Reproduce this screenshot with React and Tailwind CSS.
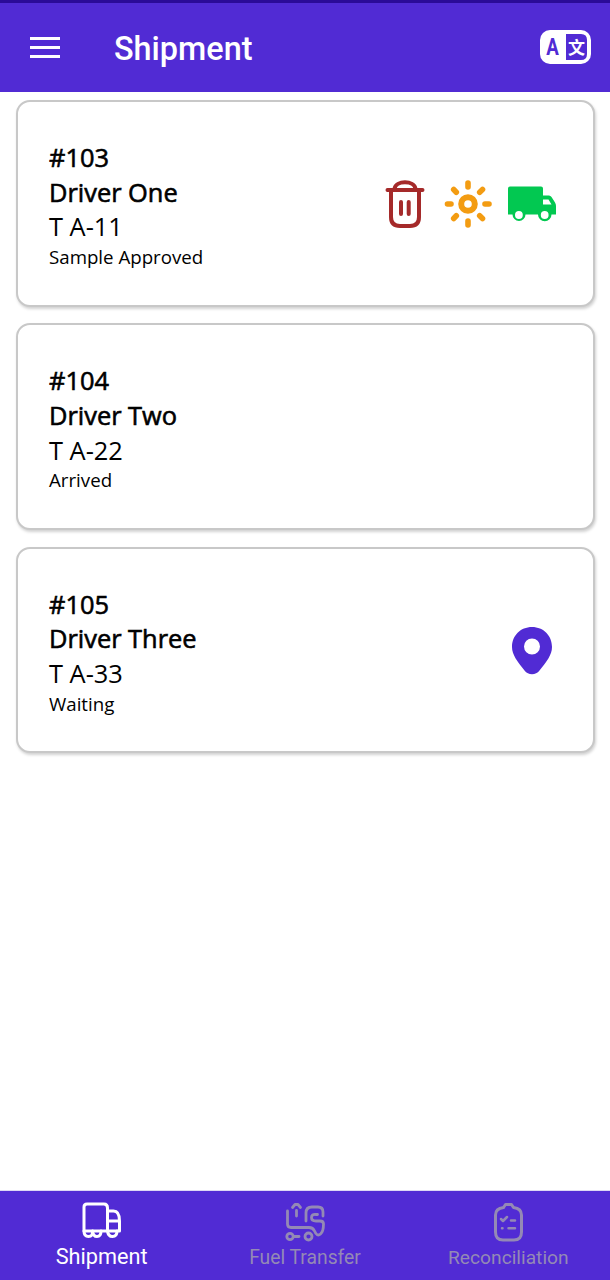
import React from "react";

function TrashIcon() {
  return (
    <svg className="h-[50px] w-[42px]" viewBox="384 179 42 50" fill="none" stroke="#a52a2a" strokeWidth="4" strokeLinecap="round" strokeLinejoin="round">
      <path d="M387.500 190H422.500M394.500 189C395.500 180 414.500 180 415.500 189M391 190V217Q391 226 400 226H410Q419 226 419 217V190M401 202V214M408.700 202V214" />
    </svg>
  );
}

function SunIcon() {
  return (
    <svg className="h-[50px] w-[50px]" viewBox="443 179 50 50" fill="none" stroke="#f39c12" strokeWidth="5.6" strokeLinecap="round">
      <circle cx="468" cy="204" r="6.800" strokeWidth="6" />
      <path d="M468 183V187M468 221V225M447.500 204H451M485 204H489M453.700 189.500L456.300 192.200M479.700 192.200L482.500 189.500M453.700 218.500L456.300 215.800M479.700 215.800L482.500 218.500" />
    </svg>
  );
}

function DeliveryIcon() {
  return (
    <svg className="h-[38px] w-[50px]" viewBox="507 185 50 38">
      <path fill="#02c851" fillRule="evenodd" d="M510 186.500H541Q543 186.500 543 188.500V195.500H549Q550.500 195.500 551.500 197L555 202.500Q556 204 556 206V214.500H551.500A6.500 6.500 0 1 1 538 214.500H525.500A6.500 6.500 0 1 1 512.500 214.500H508V188.500Q508 186.500 510 186.500ZM543 199.500V204.500H551.500L548.500 199.500Z" />
      <circle cx="518.900" cy="215" r="3.900" fill="white" />
      <circle cx="544.700" cy="215" r="3.900" fill="white" />
    </svg>
  );
}

function PinIcon() {
  return (
    <svg className="h-[48px] w-[40px]" viewBox="512 627 40 48">
      <path fill="#512bd4" fillRule="evenodd" d="M532 627C520.500 627 512 635.700 512 647C512 655 517.500 661.500 524.500 670.500Q527.500 674.300 532 674.300Q536.500 674.300 539.500 670.500C546.500 661.500 552 655 552 647C552 635.700 543.500 627 532 627ZM532 638.500A8 8 0 1 1 532 654.500A8 8 0 1 1 532 638.500Z" />
    </svg>
  );
}

function LanguageIcon() {
  return (
    <svg className="mb-[2px] h-[34px] w-[51px]" viewBox="540 30 51 34">
      <rect x="540" y="30" width="51" height="34" rx="10" fill="white" />
      <path fill="#512bd4" d="M566 34H581Q587 34 587 40V54Q587 60 581 60H566Z" />
      <text transform="translate(546.200 55.200) scale(.78 1)" className="font-['Roboto',sans-serif] text-[24px] font-bold" fill="#512bd4">A</text>
      <text x="568" y="53.500" className="font-['Noto_Sans_CJK_SC',sans-serif] text-[17px] font-bold" fill="white">文</text>
    </svg>
  );
}

function ShipmentIcon() {
  return (
    <svg className="h-[38px] w-[40px]" viewBox="82 1202 40 38" fill="none" stroke="currentColor" strokeWidth="3" strokeLinecap="round" strokeLinejoin="round">
      <path d="M84 1231V1207Q84 1204 87 1204H104Q107.500 1204 107.500 1208V1231M84 1231H119.500V1221C119.500 1214 117.500 1211 113.500 1211H108M109 1221H119" />
      <path d="M84 1231Q84 1236.500 88.500 1236.500T92.500 1231Q93 1236.500 97 1236.500T101 1231M107.500 1231Q108 1236.500 112.500 1236.500T117 1231" />
    </svg>
  );
}

function TransferIcon() {
  return (
    <svg className="h-[40px] w-[40px]" viewBox="285 1203 40 40" fill="none" stroke="currentColor" strokeWidth="2.8" strokeLinecap="round" strokeLinejoin="round">
      <path d="M287.500 1212V1225Q287.500 1228.500 291 1228.500H309Q313 1228.500 314.500 1232Q317 1238 320.500 1235Q323.500 1232.500 323.500 1225Q323.500 1222 320 1222H316Q311.500 1222 311.500 1218.500T316 1215.500H317.500M323 1217V1213Q323 1208 318 1208H312Q306 1208 306 1214V1222M292.500 1208.500L295 1205.500H298L300.500 1208.500M296.500 1211.500V1217" />
      <circle cx="290" cy="1237.500" r="3.200" />
      <circle cx="308.500" cy="1237.500" r="3.500" />
      <path d="M293.500 1237.500H299" />
    </svg>
  );
}

function ReconciliationIcon() {
  return (
    <svg className="ml-[2px] h-[40px] w-[30px]" viewBox="494 1203 30 40" fill="none" stroke="currentColor" strokeWidth="3" strokeLinecap="round" strokeLinejoin="round">
      <path d="M503.500 1208.500Q495.500 1209.500 495.500 1216V1233Q495.500 1241 503 1241H514Q521.500 1241 521.500 1233V1216Q521.500 1209.500 513.500 1208.500L511.500 1205.500H505.500L503.500 1208.500" />
      <path strokeWidth="2.5" d="M501 1220L503 1222L507 1218M511 1221.500H515M502 1229.300H502.500M508.500 1229.300H515" />
    </svg>
  );
}

const shipments = [
  { id: "#103", driver: "Driver One", truck: "T A-11", status: "Sample Approved", actions: (
    <div className="mt-[2px] mr-[36px] flex items-center">
      <TrashIcon /><div className="ml-[17px]"><SunIcon /></div><div className="ml-[14px]"><DeliveryIcon /></div>
    </div>
  ) },
  { id: "#104", driver: "Driver Two", truck: "T A-22", status: "Arrived" },
  { id: "#105", driver: "Driver Three", truck: "T A-33", status: "Waiting", actions: <div className="mt-[2px] mr-[41px]"><PinIcon /></div> },
];

function ShipmentCard({ shipment }) {
  return (
    <article className="flex h-[206.500px] items-center justify-between rounded-[14px] border-2 border-[#c8c8c8] bg-white pl-[31px] shadow-[1px_2px_3px_rgba(0,0,0,0.18)]">
      <div className="pt-[2.500px] text-[25.400px] leading-[34.700px]">
        <h2 className="font-normal [-webkit-text-stroke:0.6px_black]">{shipment.id}</h2>
        <p className="[-webkit-text-stroke:0.6px_black]">{shipment.driver}</p>
        <p>{shipment.truck}</p>
        <p className="text-[18.700px] leading-[25px]">{shipment.status}</p>
      </div>
      {shipment.actions}
    </article>
  );
}

const tabs = [
  { label: "Shipment", Icon: ShipmentIcon, className: "text-white text-[21.700px]", labelClass: "leading-[25px]" },
  { label: "Fuel Transfer", Icon: TransferIcon, className: "text-[#9489b5] text-[19.300px]", labelClass: "leading-[27px]" },
  { label: "Reconciliation", Icon: ReconciliationIcon, className: "text-[#9489b5] text-[19.200px]", labelClass: "leading-[27px]" },
];

export default function App() {
  return (
    <div className="flex h-[1280px] w-[610px] flex-col bg-white font-['Open_Sans',sans-serif] text-black">
      <header className="flex h-[92px] shrink-0 items-center border-t-[3px] border-[#2b0b98] bg-[#512bd4] pr-[19px] pl-[30px] font-['Roboto',sans-serif] text-white">
        <button aria-label="Menu" className="flex w-[30px] flex-col gap-[6px]">
          <span className="h-[3px] bg-white" />
          <span className="h-[3px] bg-white" />
          <span className="h-[3px] bg-white" />
        </button>
        <h1 className="ml-[54px] flex-1 pt-[3px] text-[32.400px] font-medium">Shipment</h1>
        <LanguageIcon />
      </header>
      <main className="flex flex-1 flex-col gap-[16.800px] pt-2 pr-[15px] pl-4">
        {shipments.map((shipment) => <ShipmentCard key={shipment.id} shipment={shipment} />)}
      </main>
      <nav className="grid h-[90px] shrink-0 grid-cols-3 border-t border-[#ddd7f5] bg-[#512bd4] font-['Roboto',sans-serif]">
        {tabs.map(({ label, Icon, className, labelClass }) => (
          <button key={label} className={`flex flex-col items-center pt-[11px] ${className}`}>
            <span className="flex h-[42px] items-start"><Icon /></span>
            <span className={labelClass}>{label}</span>
          </button>
        ))}
      </nav>
    </div>
  );
}
